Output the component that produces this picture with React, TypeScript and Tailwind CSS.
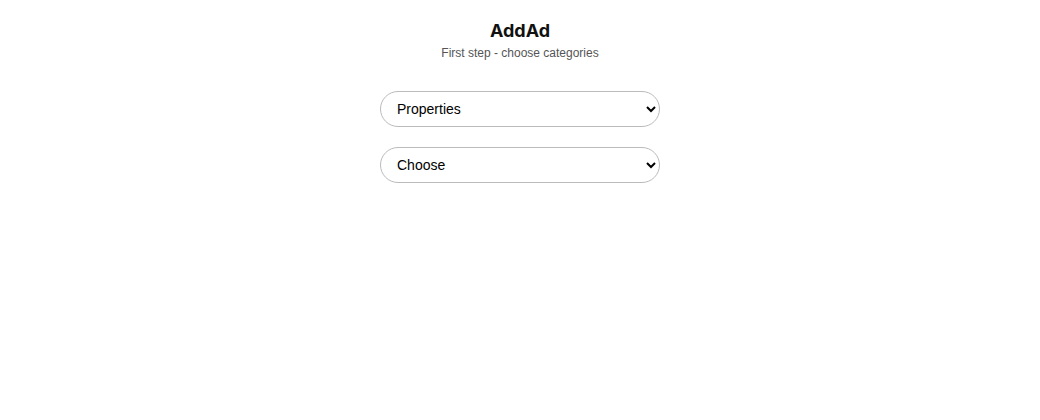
export default function App() {
  return (
    <div className="min-h-screen bg-white flex flex-col items-center pt-[19px] font-['Liberation_Sans',Arial,sans-serif]">
      <h1 className="text-[18px] leading-[24px] font-bold text-[#111] font-['Inter',sans-serif]">AddAd</h1>
      <p className="text-[12px] leading-[16px] text-[#555] mt-[2px]">First step - choose categories</p>

      <form className="flex flex-col gap-5 mt-[30px] w-[280px]">
        <select
          defaultValue="properties"
          className="h-[36px] w-full rounded-[18px] border border-[#bbb] bg-white pl-3 pr-2 text-[14px] text-black outline-none"
        >
          <option value="properties">Properties</option>
          <option value="vehicles">Vehicles</option>
          <option value="jobs">Jobs</option>
        </select>
        <select
          defaultValue=""
          className="h-[36px] w-full rounded-[18px] border border-[#bbb] bg-white pl-3 pr-2 text-[14px] text-black outline-none"
        >
          <option value="">Choose</option>
          <option value="apartments">Apartments</option>
          <option value="houses">Houses</option>
        </select>
      </form>
    </div>
  )
}
